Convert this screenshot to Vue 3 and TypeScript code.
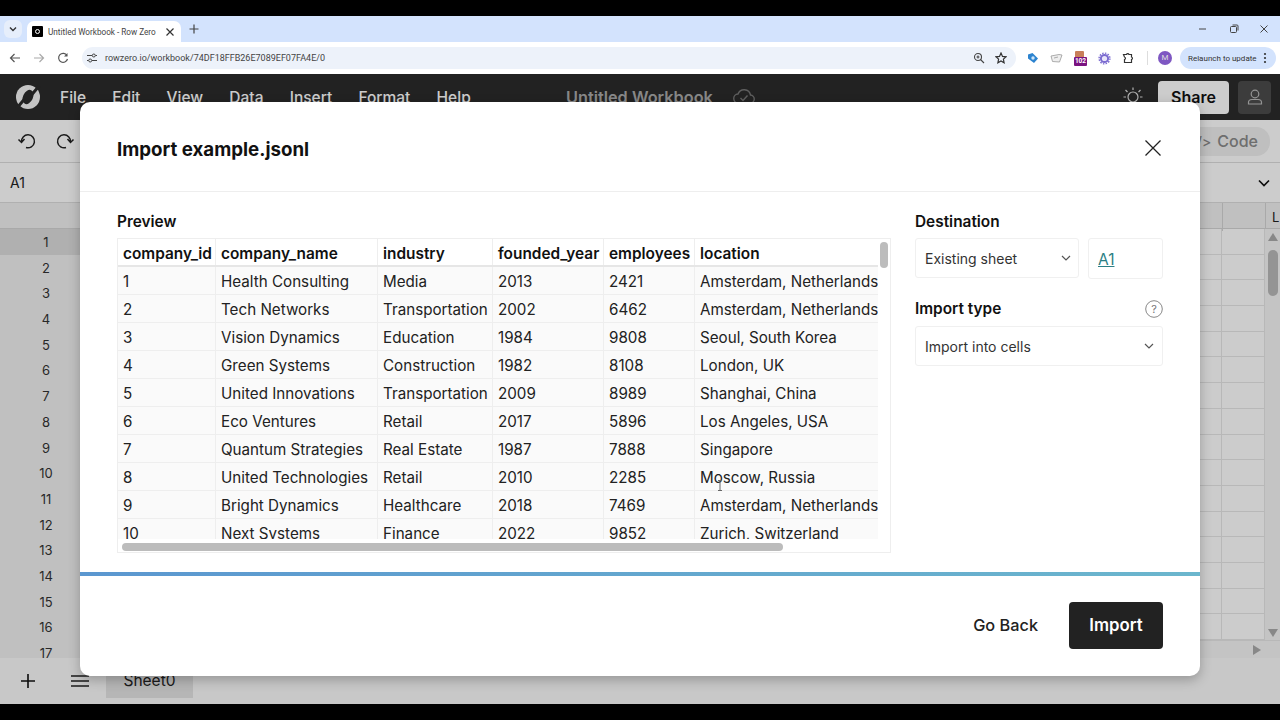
<script setup lang="ts">
const menus = ['File', 'Edit', 'View', 'Data', 'Insert', 'Format', 'Help']
const rowNumbers = Array.from({ length: 17 }, (_, i) => i + 1)
const headers = ['company_id', 'company_name', 'industry', 'founded_year', 'employees', 'location']
const rows: (string | number)[][] = [
  [1, 'Health Consulting', 'Media', 2013, 2421, 'Amsterdam, Netherlands'],
  [2, 'Tech Networks', 'Transportation', 2002, 6462, 'Amsterdam, Netherlands'],
  [3, 'Vision Dynamics', 'Education', 1984, 9808, 'Seoul, South Korea'],
  [4, 'Green Systems', 'Construction', 1982, 8108, 'London, UK'],
  [5, 'United Innovations', 'Transportation', 2009, 8989, 'Shanghai, China'],
  [6, 'Eco Ventures', 'Retail', 2017, 5896, 'Los Angeles, USA'],
  [7, 'Quantum Strategies', 'Real Estate', 1987, 7888, 'Singapore'],
  [8, 'United Technologies', 'Retail', 2010, 2285, 'Moscow, Russia'],
  [9, 'Bright Dynamics', 'Healthcare', 2018, 7469, 'Amsterdam, Netherlands'],
  [10, 'Next Systems', 'Finance', 2022, 9852, 'Zurich, Switzerland'],
]
</script>

<template>
  <div class="screen">
    <div class="letterbox-top"></div>

    <div class="tabstrip">
      <div class="tab-search">
        <svg width="10" height="10" viewBox="0 0 10 10"><path d="M2 3.5 5 6.5 8 3.5" fill="none" stroke="#333" stroke-width="1.4" /></svg>
      </div>
      <div class="tab">
        <span class="favicon"><i></i></span>
        <span class="tab-title">Untitled Workbook - Row Zero</span>
        <svg width="10" height="10" viewBox="0 0 10 10"><path d="M1.5 1.5 8.5 8.5M8.5 1.5 1.5 8.5" stroke="#333" stroke-width="1.2" /></svg>
      </div>
      <svg class="new-tab" width="10" height="10" viewBox="0 0 10 10"><path d="M5 0.5V9.5M0.5 5H9.5" stroke="#444" stroke-width="1.2" /></svg>
      <div class="win-controls">
        <svg width="10" height="10" viewBox="0 0 10 10"><path d="M1 5H8" stroke="#444" stroke-width="1" /></svg>
        <svg width="10" height="10" viewBox="0 0 10 10"><rect x="1.5" y="2.5" width="6" height="6" rx="1" fill="none" stroke="#444" /><path d="M3.5 1H8a1 1 0 0 1 1 1V6.5" fill="none" stroke="#444" /></svg>
        <svg width="10" height="10" viewBox="0 0 10 10"><path d="M1.5 1.5 8.5 8.5M8.5 1.5 1.5 8.5" stroke="#444" stroke-width="1" /></svg>
      </div>
    </div>

    <div class="chrome-bar">
      <svg width="12" height="12" viewBox="0 0 12 12"><path d="M11 6H2M5.5 2 1.5 6 5.5 10" fill="none" stroke="#555" stroke-width="1.2" /></svg>
      <svg width="12" height="12" viewBox="0 0 12 12"><path d="M1 6H10M6.5 2 10.5 6 6.5 10" fill="none" stroke="#aaa" stroke-width="1.2" /></svg>
      <svg width="12" height="12" viewBox="0 0 12 12"><path d="M10 3.5A4.5 4.5 0 1 0 10.5 7" fill="none" stroke="#555" stroke-width="1.2" /><path d="M10.5 1V4.5H7" fill="#555" /></svg>
      <div class="omnibox">
        <svg width="12" height="12" viewBox="0 0 12 12"><path d="M1 3.5H6M9.5 3.5H11M1 8.5H2.5M6 8.5H11" stroke="#444" stroke-width="1.1" /><circle cx="7.8" cy="3.5" r="1.5" fill="none" stroke="#444" /><circle cx="4.2" cy="8.5" r="1.5" fill="none" stroke="#444" /></svg>
        <span class="url">rowzero.io/workbook/74DF18FFB26E7089EF07FA4E/0</span>
        <svg class="push" width="12" height="12" viewBox="0 0 12 12"><circle cx="5" cy="5" r="3.5" fill="none" stroke="#444" stroke-width="1.1" /><path d="M7.5 7.5 11 11M3.5 5H6.5M5 3.5V6.5" stroke="#444" stroke-width="1.1" /></svg>
        <svg width="12" height="12" viewBox="0 0 12 12"><path d="M6 1 7.5 4.4 11 4.8 8.4 7.1 9.1 10.7 6 8.9 2.9 10.7 3.6 7.1 1 4.8 4.5 4.4Z" fill="none" stroke="#333" stroke-width="1.2" /></svg>
      </div>
      <div class="extensions">
        <svg width="12" height="12" viewBox="0 0 12 12"><path d="M1 2.5 5.5 1 11 6.5 7 11 1 6.5Z" fill="#2c83cf" /><circle cx="6" cy="6" r="1.7" fill="#cfe6f8" /></svg>
        <svg width="13" height="12" viewBox="0 0 13 12"><path d="M1 4 9 2.5 12 3 9.5 10 2.5 9.5Z" fill="#eee" stroke="#999" stroke-width="0.8" /><path d="M4 6 8 5" stroke="#999" stroke-width="0.8" /></svg>
        <span class="badge-ext"><i></i><b>102</b></span>
        <svg width="13" height="13" viewBox="0 0 13 13"><circle cx="6.5" cy="6.5" r="3.6" fill="#e8e4fa" stroke="#7a6ad0" stroke-width="2" /><circle cx="6.5" cy="6.5" r="5.4" fill="none" stroke="#7a6ad0" stroke-width="1.4" stroke-dasharray="1.5 1.3" /></svg>
        <svg width="12" height="12" viewBox="0 0 12 12"><path d="M1.5 2.5H4.5A1.3 1.3 0 0 1 7 2.5H9.5V5A1.3 1.3 0 0 1 9.5 7.5V10.5H2.5V7.5A1.3 1.3 0 0 0 2.5 5Z" fill="none" stroke="#333" stroke-width="1.2" /></svg>
        <span class="sep"></span>
        <span class="avatar">M</span>
      </div>
      <div class="relaunch">
        <span>Relaunch to update</span>
        <svg width="4" height="12" viewBox="0 0 4 12"><circle cx="2" cy="2" r="1.1" fill="#333" /><circle cx="2" cy="6" r="1.1" fill="#333" /><circle cx="2" cy="10" r="1.1" fill="#333" /></svg>
      </div>
    </div>

    <div class="app">
      <header class="app-header">
        <svg class="logo" width="26" height="26" viewBox="0 0 26 26">
          <circle cx="13" cy="13" r="12" fill="#f6f6f6" />
          <ellipse cx="13" cy="13" rx="5" ry="7.5" transform="rotate(25 13 13)" fill="#2b2b2b" />
          <path d="M2 24 9.5 15M24 2 16.5 11" stroke="#2b2b2b" stroke-width="3" />
        </svg>
        <nav class="menu">
          <span v-for="m in menus" :key="m">{{ m }}</span>
        </nav>
        <div class="doc-title">
          <span>Untitled Workbook</span>
          <svg width="24" height="20" viewBox="0 0 24 20"><path d="M6.5 16A4.5 4.5 0 0 1 6 7 6.5 6.5 0 0 1 18.5 8 4 4 0 0 1 18 16Z" fill="none" stroke="#777" stroke-width="1.4" /><path d="M8.5 11 11 13.5 15.5 8.5" fill="none" stroke="#777" stroke-width="1.4" /></svg>
        </div>
        <svg class="sun" width="22" height="22" viewBox="0 0 22 22"><circle cx="11" cy="11" r="5" fill="none" stroke="#ddd" stroke-width="1.2" /><path d="M11 1.5V4M3.5 4 5.5 6M18.5 4 16.5 6M1.5 11H4M18 11H20.5M9 18H13" stroke="#ddd" stroke-width="1.2" /></svg>
        <button class="share">Share</button>
        <button class="user">
          <svg width="18" height="18" viewBox="0 0 18 18"><circle cx="9" cy="6" r="3.8" fill="none" stroke="#bbb" stroke-width="1.2" /><path d="M2.5 16V14.5C2.5 12.5 4 11.5 6 11.5H12C14 11.5 15.5 12.5 15.5 14.5V16Z" fill="none" stroke="#bbb" stroke-width="1.2" /></svg>
        </button>
      </header>

      <div class="toolbar">
        <svg width="20" height="20" viewBox="0 0 20 20"><path d="M4.5 11A6.5 6.5 0 1 1 9 16.5M1.5 8.5 4.5 11.5 7.5 8" fill="none" stroke="#222" stroke-width="1.5" /></svg>
        <svg width="20" height="20" viewBox="0 0 20 20"><path d="M15.5 11A6.5 6.5 0 1 0 11 16.5M18.5 8.5 15.5 11.5 12.5 8" fill="none" stroke="#222" stroke-width="1.5" /></svg>
        <div class="code-pill"><span class="code-glyph">&lt;/&gt;</span> Code</div>
      </div>

      <div class="formula">
        <span>A1</span>
        <svg width="12" height="8" viewBox="0 0 12 8"><path d="M1 1.5 6 6.5 11 1.5" fill="none" stroke="#111" stroke-width="1.7" /></svg>
      </div>

      <div class="sheet">
        <div class="col-head">
          <span></span><span></span><span class="cell-head"></span><span class="cell-head l">L</span>
        </div>
        <div class="sheet-body">
          <div class="rows">
            <div v-for="n in rowNumbers" :key="n" class="sheet-row">
              <span class="num" :class="{ active: n === 1 }">{{ n }}</span>
              <span class="cell"></span>
              <span class="cell"></span>
            </div>
          </div>
          <div class="v-scroll">
            <svg class="arrow" width="10" height="8" viewBox="0 0 10 8"><path d="M5 0 10 8H0Z" fill="#aaa" /></svg>
            <div class="v-thumb"></div>
            <svg class="arrow down" width="10" height="8" viewBox="0 0 10 8"><path d="M0 0H10L5 8Z" fill="#aaa" /></svg>
          </div>
        </div>
        <div class="h-scroll">
          <svg width="8" height="10" viewBox="0 0 8 10"><path d="M0 0 8 5 0 10Z" fill="#aaa" /></svg>
        </div>
      </div>

      <footer class="sheet-bar">
        <svg width="16" height="16" viewBox="0 0 16 16"><path d="M8 1V15M1 8H15" stroke="#111" stroke-width="1.6" /></svg>
        <svg class="hamb" width="18" height="14" viewBox="0 0 18 14"><path d="M0 2H18M0 7H18M0 12H18" stroke="#222" stroke-width="1.6" /></svg>
        <div class="sheet-tab">Sheet0</div>
      </footer>

      <div class="dim"></div>
    </div>

    <div class="letterbox-bottom"></div>

    <section class="modal">
      <div class="modal-head">
        <h1>Import example.jsonl</h1>
        <svg width="18" height="18" viewBox="0 0 18 18"><path d="M1.5 1.5 16.5 16.5M16.5 1.5 1.5 16.5" stroke="#222" stroke-width="1.3" /></svg>
      </div>

      <div class="modal-body">
        <div class="preview">
          <div class="label">Preview</div>
          <div class="table-frame">
            <div class="table-clip">
              <div class="t-row t-head">
                <span v-for="h in headers" :key="h">{{ h }}</span>
              </div>
              <div v-for="(r, i) in rows" :key="i" class="t-row">
                <span v-for="(c, j) in r" :key="j">{{ c }}</span>
              </div>
            </div>
            <div class="t-vthumb"></div>
            <div class="t-hthumb"></div>
            <svg class="cursor" width="6" height="11" viewBox="0 0 6 11"><path d="M1 0.5H5M3 0.5V10.5M1 10.5H5" fill="none" stroke="#666" /></svg>
          </div>
        </div>

        <aside class="side">
          <div class="label">Destination</div>
          <div class="dest-row">
            <div class="select dest-select">
              <span>Existing sheet</span>
              <svg width="10" height="6" viewBox="0 0 10 6"><path d="M1 1 5 5 9 1" fill="none" stroke="#555" stroke-width="1.2" /></svg>
            </div>
            <div class="cell-ref"><span>A1</span></div>
          </div>
          <div class="label type-label">
            <span>Import type</span>
            <svg width="18" height="18" viewBox="0 0 18 18"><circle cx="9" cy="9" r="8.3" fill="none" stroke="#888" /><text x="9" y="13" text-anchor="middle" font-size="11" font-weight="400" fill="#777" font-family="Inter, sans-serif">?</text></svg>
          </div>
          <div class="select">
            <span>Import into cells</span>
            <svg width="10" height="6" viewBox="0 0 10 6"><path d="M1 1 5 5 9 1" fill="none" stroke="#555" stroke-width="1.2" /></svg>
          </div>
        </aside>
      </div>

      <div class="progress"></div>

      <div class="modal-foot">
        <button class="go-back">Go Back</button>
        <button class="import">Import</button>
      </div>
    </section>
  </div>
</template>

<style>
html, body { margin: 0; background: #000; }
</style>

<style scoped>
.screen {
  position: relative;
  width: 1280px;
  height: 720px;
  overflow: hidden;
  background: #000;
  display: flex;
  flex-direction: column;
  font-family: Inter, "Noto Sans", sans-serif;
}
.letterbox-top { height: 16px; flex: none; }
.letterbox-bottom { height: 16px; flex: none; }

.tabstrip {
  height: 26px;
  flex: none;
  background: #d3e3fd;
  display: flex;
  align-items: center;
  padding-left: 4px;
}
.tab-search {
  width: 18px;
  height: 18px;
  margin-right: 5px;
  border-radius: 6px;
  background: #e6eefb;
  display: flex;
  align-items: center;
  justify-content: center;
}
.tab {
  width: 154px;
  height: 21px;
  margin-top: 5px;
  box-sizing: border-box;
  padding: 0 6px 0 5px;
  background: #fff;
  border-radius: 7px 7px 0 0;
  display: flex;
  align-items: center;
  gap: 5px;
}
.favicon {
  width: 11px;
  height: 11px;
  background: #000;
  border-radius: 1px;
  flex: none;
  display: flex;
  align-items: center;
  justify-content: center;
}
.favicon i {
  width: 5px;
  height: 5px;
  border: 1px solid #fff;
  border-radius: 50%;
  box-sizing: border-box;
}
.tab-title {
  flex: 1;
  font: 8.2px Roboto, sans-serif;
  color: #444;
  white-space: nowrap;
}
.new-tab { margin-left: 8px; }
.win-controls {
  margin-left: auto;
  width: 92px;
  display: flex;
  justify-content: space-between;
  padding: 0 11px 0 10px;
  box-sizing: border-box;
}

.chrome-bar {
  height: 32px;
  flex: none;
  box-sizing: border-box;
  background: #fff;
  display: flex;
  align-items: center;
  padding: 0 4px 0 9px;
}
.chrome-bar > svg { margin-right: 12px; flex: none; }
.omnibox {
  width: 934px;
  flex: none;
  height: 22px;
  margin-left: 1px;
  border-radius: 11px;
  background: #edf2fa;
  display: flex;
  align-items: center;
  padding: 0 9px 0 4px;
  box-sizing: border-box;
  gap: 7px;
}
.url { font: 9px Roboto, sans-serif; color: #444; }
.push { margin-left: auto; margin-right: 3px; }
.extensions {
  width: 164px;
  flex: none;
  display: flex;
  align-items: center;
  gap: 11px;
  padding-left: 11px;
  box-sizing: border-box;
}
.badge-ext {
  position: relative;
  width: 13px;
  height: 15px;
  flex: none;
}
.badge-ext i {
  position: absolute;
  left: 1px;
  top: 0;
  width: 9px;
  height: 7px;
  background: #c87f5a;
  border-radius: 1px;
}
.badge-ext b {
  position: absolute;
  left: 0;
  bottom: 0;
  width: 13px;
  height: 9px;
  background: #7a1280;
  border-radius: 1px;
  color: #fff;
  font: 700 6.5px/9px Roboto, sans-serif;
  text-align: center;
}
.sep { width: 1px; height: 14px; background: #ddd; margin-left: 2px; }
.avatar {
  width: 14px;
  height: 14px;
  border-radius: 50%;
  background: #7e57c2;
  color: #ddd;
  font: 8px/14px Roboto, sans-serif;
  text-align: center;
  margin-left: -1px;
}
.relaunch {
  width: 96px;
  height: 22px;
  flex: none;
  border-radius: 11px;
  background: #d3e3fd;
  box-sizing: border-box;
  padding: 0 9px 0 8px;
  display: flex;
  align-items: center;
  justify-content: space-between;
  font: 8px Roboto, sans-serif;
  color: #333;
  white-space: nowrap;
}

.app {
  position: relative;
  flex: 1;
  min-height: 0;
  display: flex;
  flex-direction: column;
  background: #fff;
}
.dim {
  position: absolute;
  inset: 0;
  background: rgba(0, 0, 0, 0.2);
}
.app-header {
  height: 46px;
  flex: none;
  background: #2b2b2b;
  display: flex;
  align-items: center;
  padding: 0 9px 0 15px;
  color: #fff;
}
.logo { flex: none; }
.menu {
  position: absolute;
  left: 60px;
  top: 14px;
  display: flex;
  gap: 26.2px;
  font-size: 15.5px;
  font-weight: 500;
  line-height: 20px;
}
.doc-title {
  position: absolute;
  left: 566px;
  top: 12px;
  display: flex;
  align-items: center;
  gap: 19px;
  font-size: 16.3px;
  font-weight: 600;
  color: #aaa;
  line-height: 22px;
}
.sun { margin-left: auto; margin-right: 14px; }
.share {
  width: 71px;
  height: 33px;
  border: 0;
  border-radius: 4px;
  background: #fff;
  color: #111;
  font: 600 16px Inter, sans-serif;
  margin-right: 9px;
}
.user {
  width: 33px;
  height: 33px;
  border: 0;
  padding: 0;
  border-radius: 4px;
  background: #4c4c4c;
  display: flex;
  align-items: center;
  justify-content: center;
}

.toolbar {
  height: 43px;
  flex: none;
  box-sizing: border-box;
  background: #fff;
  border-bottom: 1px solid #ddd;
  display: flex;
  align-items: center;
  gap: 18px;
  padding: 0 10px 0 17px;
}
.code-pill {
  margin-left: auto;
  height: 29px;
  padding: 0 12px 0 20px;
  border-radius: 14px;
  background: #efefef;
  display: flex;
  align-items: center;
  gap: 6px;
  color: #8a8a8a;
  font-size: 16px;
  font-weight: 500;
}
.code-glyph { font-size: 14px; }

.formula {
  height: 40px;
  flex: none;
  box-sizing: border-box;
  background: #fff;
  border-bottom: 1px solid #ddd;
  display: flex;
  align-items: center;
  justify-content: space-between;
  padding: 0 10px;
  font-size: 14px;
  color: #222;
}

.sheet {
  position: relative;
  flex: 1;
  min-height: 0;
  display: flex;
  flex-direction: column;
  overflow: hidden;
}
.col-head {
  height: 26px;
  flex: none;
  box-sizing: border-box;
  display: grid;
  grid-template-columns: 92px 1fr 43px 15px;
  background: #f1f1f1;
  border-bottom: 1px solid #d4d4d4;
  font-size: 13px;
  color: #222;
}
.cell-head { border-left: 1px solid #d4d4d4; }
.cell-head.l { padding-left: 6px; line-height: 28px; white-space: nowrap; }
.sheet-body {
  flex: 1;
  min-height: 0;
  display: flex;
  overflow: hidden;
}
.rows {
  flex: 1;
  min-width: 0;
}
.sheet-row {
  height: 25.7px;
  box-sizing: border-box;
  display: grid;
  grid-template-columns: 92px 1fr 43px;
  border-bottom: 1px solid #e6e6e6;
}
.num {
  background: #f1f1f1;
  font-size: 13px;
  color: #333;
  text-align: center;
  line-height: 27px;
  border-bottom: 1px solid #d4d4d4;
  margin-bottom: -1px;
}
.num.active { background: #dcdcdc; }
.cell { border-right: 1px solid #e6e6e6; }
.v-scroll {
  width: 15px;
  flex: none;
  position: relative;
  background: #f5f5f5;
  display: flex;
  flex-direction: column;
  align-items: center;
  height: 411px;
  padding-top: 4px;
  box-sizing: border-box;
}
.arrow { flex: none; }
.arrow.down { margin-top: auto; margin-bottom: 3px; }
.v-thumb {
  width: 10px;
  height: 46px;
  margin-top: 9px;
  border-radius: 5px;
  background: #b9b9b9;
}
.h-scroll {
  position: absolute;
  left: 92px;
  right: 0;
  bottom: 0;
  height: 18px;
  box-sizing: border-box;
  background: #f5f5f5;
  border-top: 1px solid #e6e6e6;
  display: flex;
  align-items: center;
  justify-content: flex-end;
  padding-right: 19px;
}
.sheet-bar {
  height: 46px;
  flex: none;
  background: #fafafa;
  display: flex;
  align-items: center;
  padding-left: 20px;
  position: relative;
}
.hamb { margin-left: 35px; }
.sheet-tab {
  margin-left: 17px;
  width: 87px;
  height: 40px;
  align-self: flex-start;
  box-sizing: border-box;
  padding-top: 14px;
  text-align: center;
  background: #e4e4e4;
  font-size: 15.5px;
  color: #222;
  line-height: 18px;
}

.modal {
  position: absolute;
  left: 80px;
  top: 102px;
  width: 1120px;
  height: 574px;
  border-radius: 10px;
  background: #fff;
  box-shadow: 0 4px 12px rgba(0, 0, 0, 0.25);
  display: flex;
  flex-direction: column;
}
.modal-head {
  height: 90px;
  flex: none;
  box-sizing: border-box;
  border-bottom: 1px solid #eee;
  display: flex;
  align-items: center;
  justify-content: space-between;
  padding: 2px 38px 0 37px;
}
.modal-head h1 {
  margin: 4px 0 0;
  font-size: 18.7px;
  font-weight: 700;
  color: #111;
}
.modal-body {
  flex: 1;
  min-height: 0;
  display: flex;
  padding: 0 37px;
  gap: 24px;
}
.preview { width: 774px; flex: none; padding-top: 20px; }
.label {
  font-size: 15.4px;
  font-weight: 600;
  color: #111;
  line-height: 20px;
}
.table-frame {
  position: relative;
  margin-top: 6px;
  height: 315px;
  box-sizing: border-box;
  border: 1px solid #eee;
}
.table-clip {
  width: 760px;
  height: 300px;
  overflow: hidden;
  background: #fafafa;
}
.t-row {
  display: grid;
  grid-template-columns: 98px 162px 115px 111px 91px 183px;
  height: 28px;
  box-sizing: border-box;
  border-bottom: 1px solid #eee;
  font-size: 15.2px;
  color: #222;
  line-height: 28px;
}
.t-row span {
  padding: 1px 0 0 5px;
  border-right: 1px solid #eee;
  white-space: nowrap;
  overflow: hidden;
}
.t-row span:last-child { border-right: 0; }
.t-head {
  height: 28px;
  background: #fff;
  font-size: 15.4px;
  font-weight: 600;
  color: #111;
  border-bottom: 2px solid #e6e6e6;
  line-height: 28px;
}
.t-vthumb {
  position: absolute;
  left: 762px;
  top: 3px;
  width: 8px;
  height: 26px;
  border-radius: 4px;
  background: #bcbcbc;
}
.t-hthumb {
  position: absolute;
  left: 4px;
  top: 304px;
  width: 661px;
  height: 8px;
  border-radius: 4px;
  background: #bcbcbc;
}
.cursor {
  position: absolute;
  left: 599px;
  top: 241px;
}
.side { flex: 1; padding-top: 20px; }
.dest-row {
  margin-top: 6px;
  display: flex;
  gap: 9px;
}
.select {
  height: 40px;
  box-sizing: border-box;
  border: 1px solid #f0f0f0;
  border-radius: 3px;
  display: flex;
  align-items: center;
  justify-content: space-between;
  padding: 0 8px 0 9px;
  font-size: 14px;
  color: #333;
}
.dest-select { width: 164px; padding-right: 7px; }
.cell-ref {
  width: 75px;
  height: 41px;
  box-sizing: border-box;
  border: 1px solid #f0f0f0;
  border-radius: 3px;
  padding-left: 9px;
  font-size: 15.5px;
  line-height: 41px;
  color: #2c7f85;
  text-decoration: underline;
}
.type-label {
  display: flex;
  align-items: center;
  justify-content: space-between;
  margin-top: 20px;
  margin-bottom: 7px;
}
.progress {
  height: 4px;
  flex: none;
  background: linear-gradient(90deg, #5b97d0, #6bb6cd);
}
.modal-foot {
  height: 100px;
  flex: none;
  box-sizing: border-box;
  display: flex;
  align-items: center;
  justify-content: flex-end;
  gap: 31px;
  padding: 0 37px 2px 0;
}
.go-back {
  border: 0;
  padding: 0;
  background: none;
  font: 500 16.3px Inter, sans-serif;
  color: #222;
}
.import {
  width: 94px;
  height: 47px;
  border: 0;
  border-radius: 4px;
  background: #222;
  color: #fff;
  font: 600 16.8px Inter, sans-serif;
}
</style>
